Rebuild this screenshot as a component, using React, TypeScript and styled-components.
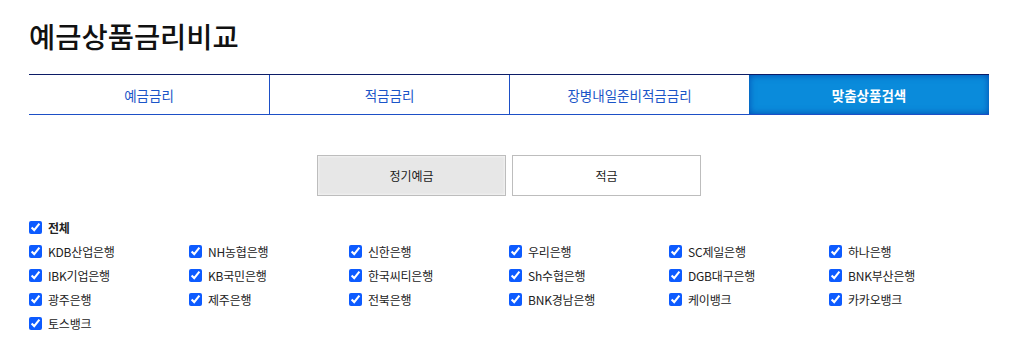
import React, { useState } from 'react';
import styled, { createGlobalStyle, css } from 'styled-components';

const GlobalStyle = createGlobalStyle`
  body {
    margin: 0;
    background: #ffffff;
    font-family: "Noto Sans CJK KR", "Noto Sans", sans-serif;
    color: #222222;
  }
`;

const Page = styled.div`
  width: 960px;
  padding: 21px 0 0 29px;
`;

const Title = styled.h1`
  margin: 0;
  font-size: 28.5px;
  font-weight: 500;
  line-height: 30px;
  color: #111111;
`;

const TabBar = styled.div`
  margin-top: 23px;
  display: grid;
  grid-template-columns: repeat(4, 1fr);
  border-top: 1px solid #0c1c66;
  border-bottom: 1px solid #1d4fc6;
`;

const Tab = styled.div<{ active: boolean }>`
  height: 39px;
  display: flex;
  align-items: center;
  justify-content: center;
  font-size: 13.5px;
  color: #1b55c8;
  border-left: 1px solid #1d4fc6;
  cursor: pointer;
  &:first-child {
    border-left: 0;
  }
  ${({ active }) =>
    active &&
    css`
      background: #0a8bdb;
      color: #ffffff;
      font-weight: 700;
      border-left: 0;
      box-shadow: inset 0 0 7px rgba(0, 50, 160, 0.75);
    `}
`;

const TypeRow = styled.div`
  margin-top: 40px;
  display: flex;
  justify-content: center;
  gap: 6px;
`;

const TypeButton = styled.div<{ selected: boolean }>`
  width: 187px;
  height: 39px;
  border: 1px solid #bdbdbd;
  background: #ffffff;
  display: flex;
  align-items: center;
  justify-content: center;
  font-size: 12px;
  color: #222222;
  cursor: pointer;
  ${({ selected }) =>
    selected &&
    css`
      background: #e7e7e7;
      box-shadow: inset 0 0 3px rgba(255, 255, 255, 0.9);
    `}
`;

const CheckList = styled.div`
  margin-top: 19px;
`;

const CheckGrid = styled.div`
  display: grid;
  grid-template-columns: repeat(6, 160px);
`;

const CheckItem = styled.label<{ bold?: boolean }>`
  height: 24px;
  display: flex;
  align-items: center;
  gap: 6px;
  font-size: 12px;
  color: #222222;
  letter-spacing: -0.2px;
  cursor: pointer;
  ${({ bold }) =>
    bold &&
    css`
      font-weight: 700;
    `}
`;

const Box = styled.input`
  width: 13px;
  height: 13px;
  margin: 0;
  accent-color: #0d5bff;
`;

const banks = [
  'KDB산업은행', 'NH농협은행', '신한은행', '우리은행', 'SC제일은행', '하나은행',
  'IBK기업은행', 'KB국민은행', '한국씨티은행', 'Sh수협은행', 'DGB대구은행', 'BNK부산은행',
  '광주은행', '제주은행', '전북은행', 'BNK경남은행', '케이뱅크', '카카오뱅크',
  '토스뱅크',
];

const tabs = ['예금금리', '적금금리', '장병내일준비적금금리', '맞춤상품검색'];

export default function App() {
  const [tab, setTab] = useState(3);
  const [type, setType] = useState(0);
  const [checked, setChecked] = useState<boolean[]>(banks.map(() => true));
  const all = checked.every(Boolean);

  return (
    <Page>
      <GlobalStyle />
      <Title>예금상품금리비교</Title>
      <TabBar>
        {tabs.map((t, i) => (
          <Tab key={t} active={tab === i} onClick={() => setTab(i)}>
            {t}
          </Tab>
        ))}
      </TabBar>
      <TypeRow>
        <TypeButton selected={type === 0} onClick={() => setType(0)}>
          정기예금
        </TypeButton>
        <TypeButton selected={type === 1} onClick={() => setType(1)}>
          적금
        </TypeButton>
      </TypeRow>
      <CheckList>
        <CheckItem bold>
          <Box
            type="checkbox"
            checked={all}
            onChange={() => setChecked(banks.map(() => !all))}
          />
          전체
        </CheckItem>
        <CheckGrid>
          {banks.map((b, i) => (
            <CheckItem key={b}>
              <Box
                type="checkbox"
                checked={checked[i]}
                onChange={() =>
                  setChecked(checked.map((c, j) => (j === i ? !c : c)))
                }
              />
              {b}
            </CheckItem>
          ))}
        </CheckGrid>
      </CheckList>
    </Page>
  );
}
